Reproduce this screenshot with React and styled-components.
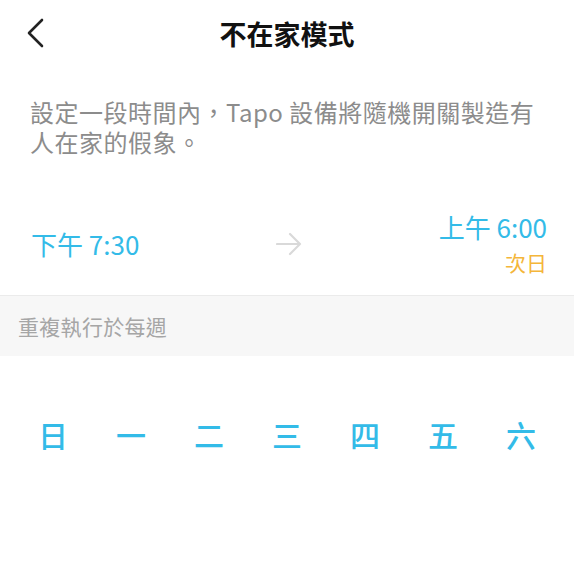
import styled, { createGlobalStyle } from 'styled-components';

const GlobalStyle = createGlobalStyle`
	html, body {
		margin: 0;
		padding: 0;
		background: #ffffff;
	}
	body {
		font-family: 'Noto Sans CJK TC', 'Noto Sans', sans-serif;
	}
`;

const Page = styled.div`
	width: 574px;
	height: 573px;
	background: #ffffff;
	overflow: hidden;
`;

const Header = styled.header`
	display: grid;
	grid-template-columns: 1fr auto 1fr;
	align-items: center;
	height: 68px;
`;

const BackButton = styled.button`
	justify-self: start;
	display: flex;
	align-items: center;
	margin: 0 0 2px 26px;
	padding: 0;
	border: none;
	background: none;
	cursor: pointer;
`;

const Title = styled.h1`
	margin: 0;
	font-size: 27px;
	font-weight: 700;
	line-height: 34px;
	color: #111111;
`;

const Description = styled.p`
	margin: 29px 0 0;
	padding: 0 30px;
	font-size: 24px;
	line-height: 30px;
	letter-spacing: 0.5px;
	color: #8c8c8c;
`;

const TimeRow = styled.div`
	display: flex;
	align-items: center;
	justify-content: space-between;
	height: 100px;
	margin-top: 38px;
	padding: 0 27px 3px 31px;
	box-sizing: border-box;
`;

const TimeSlot = styled.div`
	display: flex;
	flex-direction: column;
	align-items: ${(p) => (p.$end ? 'flex-end' : 'flex-start')};
	width: 140px;
`;

const Time = styled.span`
	font-size: 26px;
	line-height: 32px;
	color: #33bbe8;
	white-space: nowrap;
`;

const NextDay = styled.span`
	margin-top: 5px;
	font-size: 21px;
	line-height: 28px;
	color: #f4b63a;
`;

const SectionBar = styled.div`
	display: flex;
	align-items: center;
	height: 61px;
	padding-left: 18px;
	border-top: 1px solid #ebebeb;
	background: #f7f7f7;
	box-sizing: border-box;
	font-size: 21px;
	letter-spacing: 0.3px;
	color: #a6a6a6;
`;

const WeekRow = styled.div`
	display: grid;
	grid-template-columns: repeat(7, 1fr);
	height: 60px;
	margin-top: 48px;
	padding: 0 14px;
	align-items: center;
`;

const Day = styled.button`
	padding: 0;
	border: none;
	background: none;
	font-family: inherit;
	font-size: 30px;
	font-weight: 500;
	line-height: 36px;
	color: #33bbe8;
	text-align: center;
	cursor: pointer;
`;

const ChevronLeft = () => (
	<svg width='18' height='30' viewBox='0 0 18 30' fill='none'>
		<path d='M16 2 L3 15 L16 28' stroke='#222' strokeWidth='2.6' strokeLinecap='round' strokeLinejoin='round' />
	</svg>
);

const ArrowRight = () => (
	<svg width='26' height='24' viewBox='0 0 26 24' fill='none'>
		<path d='M1 12 H24 M14 2 L24 12 L14 22' stroke='#d9d9d9' strokeWidth='2.2' strokeLinecap='round' strokeLinejoin='round' />
	</svg>
);

const days = ['日', '一', '二', '三', '四', '五', '六'];

const App = () => {
	return (
		<Page>
			<GlobalStyle />
			<Header>
				<BackButton>
					<ChevronLeft />
				</BackButton>
				<Title>不在家模式</Title>
			</Header>
			<Description>設定一段時間內，Tapo 設備將隨機開關製造有人在家的假象。</Description>
			<TimeRow>
				<TimeSlot>
					<Time>下午 7:30</Time>
				</TimeSlot>
				<ArrowRight />
				<TimeSlot $end>
					<Time>上午 6:00</Time>
					<NextDay>次日</NextDay>
				</TimeSlot>
			</TimeRow>
			<SectionBar>重複執行於每週</SectionBar>
			<WeekRow>
				{days.map((d) => (
					<Day key={d}>{d}</Day>
				))}
			</WeekRow>
		</Page>
	);
};

export default App;
